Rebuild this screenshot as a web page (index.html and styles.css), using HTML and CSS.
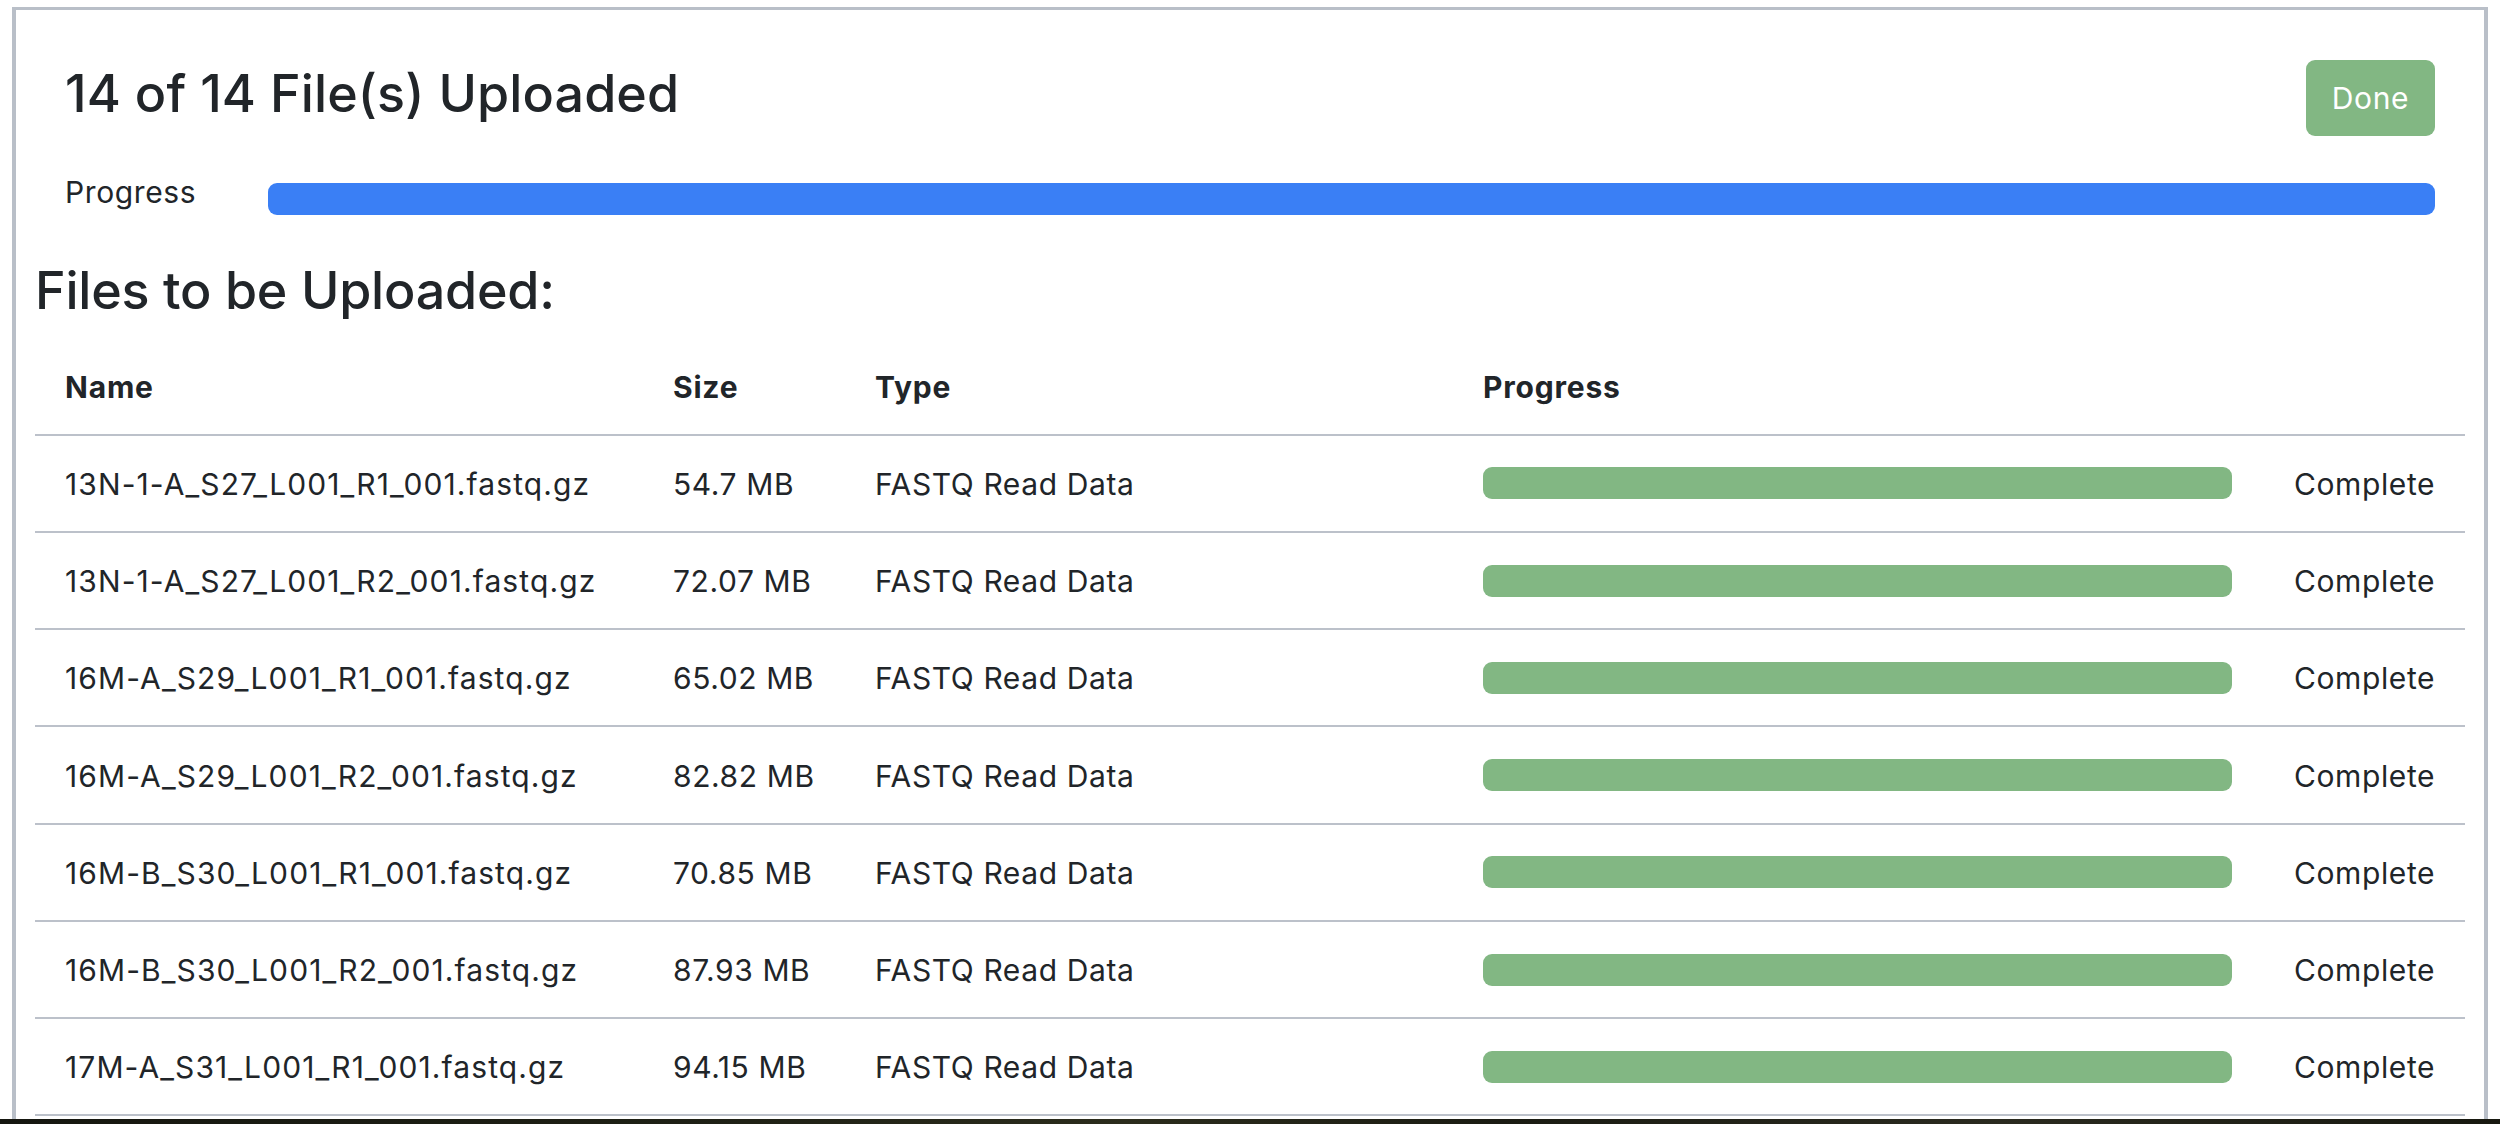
FILE: index.html
```html
<!DOCTYPE html>
<html lang="en">
<head>
<meta charset="utf-8">
<title>Upload</title>
<link rel="stylesheet" href="styles.css">
</head>
<body>
<div class="screen">
  <div class="modal">
    <div class="top">
      <div class="title-row">
        <h2 class="title">14 of 14 File(s) Uploaded</h2>
        <button class="btn-done" type="button">Done</button>
      </div>
      <div class="overall">
        <span class="overall-label">Progress</span>
        <div class="bar bar-blue"></div>
      </div>
    </div>
    <h2 class="section">Files to be Uploaded:</h2>
    <div class="files" role="table">
      <div class="row head" role="row">
        <div class="cell" role="columnheader">Name</div>
        <div class="cell" role="columnheader">Size</div>
        <div class="cell" role="columnheader">Type</div>
        <div class="cell span2" role="columnheader">Progress</div>
      </div>
      <div class="row" role="row"><div class="cell fname">13N-1-A_S27_L001_R1_001.fastq.gz</div><div class="cell">54.7 MB</div><div class="cell">FASTQ Read Data</div><div class="cell prog"><div class="bar bar-green"></div></div><div class="cell">Complete</div></div>
      <div class="row" role="row"><div class="cell fname">13N-1-A_S27_L001_R2_001.fastq.gz</div><div class="cell">72.07 MB</div><div class="cell">FASTQ Read Data</div><div class="cell prog"><div class="bar bar-green"></div></div><div class="cell">Complete</div></div>
      <div class="row" role="row"><div class="cell fname">16M-A_S29_L001_R1_001.fastq.gz</div><div class="cell">65.02 MB</div><div class="cell">FASTQ Read Data</div><div class="cell prog"><div class="bar bar-green"></div></div><div class="cell">Complete</div></div>
      <div class="row" role="row"><div class="cell fname">16M-A_S29_L001_R2_001.fastq.gz</div><div class="cell">82.82 MB</div><div class="cell">FASTQ Read Data</div><div class="cell prog"><div class="bar bar-green"></div></div><div class="cell">Complete</div></div>
      <div class="row" role="row"><div class="cell fname">16M-B_S30_L001_R1_001.fastq.gz</div><div class="cell">70.85 MB</div><div class="cell">FASTQ Read Data</div><div class="cell prog"><div class="bar bar-green"></div></div><div class="cell">Complete</div></div>
      <div class="row" role="row"><div class="cell fname">16M-B_S30_L001_R2_001.fastq.gz</div><div class="cell">87.93 MB</div><div class="cell">FASTQ Read Data</div><div class="cell prog"><div class="bar bar-green"></div></div><div class="cell">Complete</div></div>
      <div class="row" role="row"><div class="cell fname">17M-A_S31_L001_R1_001.fastq.gz</div><div class="cell">94.15 MB</div><div class="cell">FASTQ Read Data</div><div class="cell prog"><div class="bar bar-green"></div></div><div class="cell">Complete</div></div>
    </div>
  </div>
  <div class="wallpaper"></div>
</div>
</body>
</html>
```
FILE: styles.css
```css
* { box-sizing: border-box; }
html, body { margin: 0; padding: 0; background: #ffffff; }
body {
  font-family: "Inter", "Liberation Sans", sans-serif;
  color: #212529;
  font-size: 30px;
  line-height: 1.5;
  letter-spacing: 0.6px;
}
.screen {
  height: 1124px;
  display: flex;
  flex-direction: column;
  overflow: hidden;
}
.modal {
  flex: 1;
  min-height: 0;
  overflow: hidden;
  margin: 7px 12px 0 12px;
  border: 3px solid #b9bfc8;
  border-left-width: 4px;
  border-right-width: 4px;
  border-bottom: 0;
  padding: 0 19px 0 19px;
}
.wallpaper {
  height: 5px;
  flex: 0 0 5px;
  background: linear-gradient(90deg, #15160f 0%, #1f2115 30%, #2b2c1c 45%, #1a1b12 60%, #2a2a1f 80%, #17180f 100%);
}
.top { padding: 0 30px; }
.title-row {
  display: flex;
  justify-content: space-between;
  align-items: flex-start;
  margin-top: 50px;
  height: 76px;
}
.title, .section {
  margin: 0;
  font-size: 52px;
  font-weight: 500;
  line-height: 1.2;
}
.title { margin-top: 3px; letter-spacing: 0.1px; }
.section { letter-spacing: -0.2px; }
.btn-done {
  width: 129px;
  height: 76px;
  border: 0;
  border-radius: 9px;
  background: #82b783;
  color: #ffffff;
  font-family: inherit;
  font-size: 30px;
  letter-spacing: 0.6px;
  padding: 0;
}
.overall {
  display: flex;
  align-items: flex-start;
  margin-top: 35px;
}
.overall-label {
  flex: 0 0 203px;
  line-height: 43.5px;
}
.overall .bar { flex: 1; margin-top: 12px; }
.bar {
  height: 32px;
  border-radius: 9px;
}
.bar-blue { background: #3a7ff5; }
.bar-green { background: #82b783; }
.section { margin-top: 45px; }
.files {
  margin-top: 16px;
}
.row {
  display: grid;
  grid-template-columns: 608px 202px 608px 811px 1fr;
  align-items: center;
  height: 97.25px;
  border-bottom: 2px solid #bcc1ca;
}
.cell {
  padding-left: 30px;
  padding-top: 2px;
  white-space: nowrap;
}
.head .cell { font-weight: 700; letter-spacing: 0.8px; padding-top: 3px; }
.head .span2 { grid-column: span 2; }
.cell.fname { letter-spacing: 1.1px; }
.cell.prog { padding-right: 32px; padding-top: 0; }
```
